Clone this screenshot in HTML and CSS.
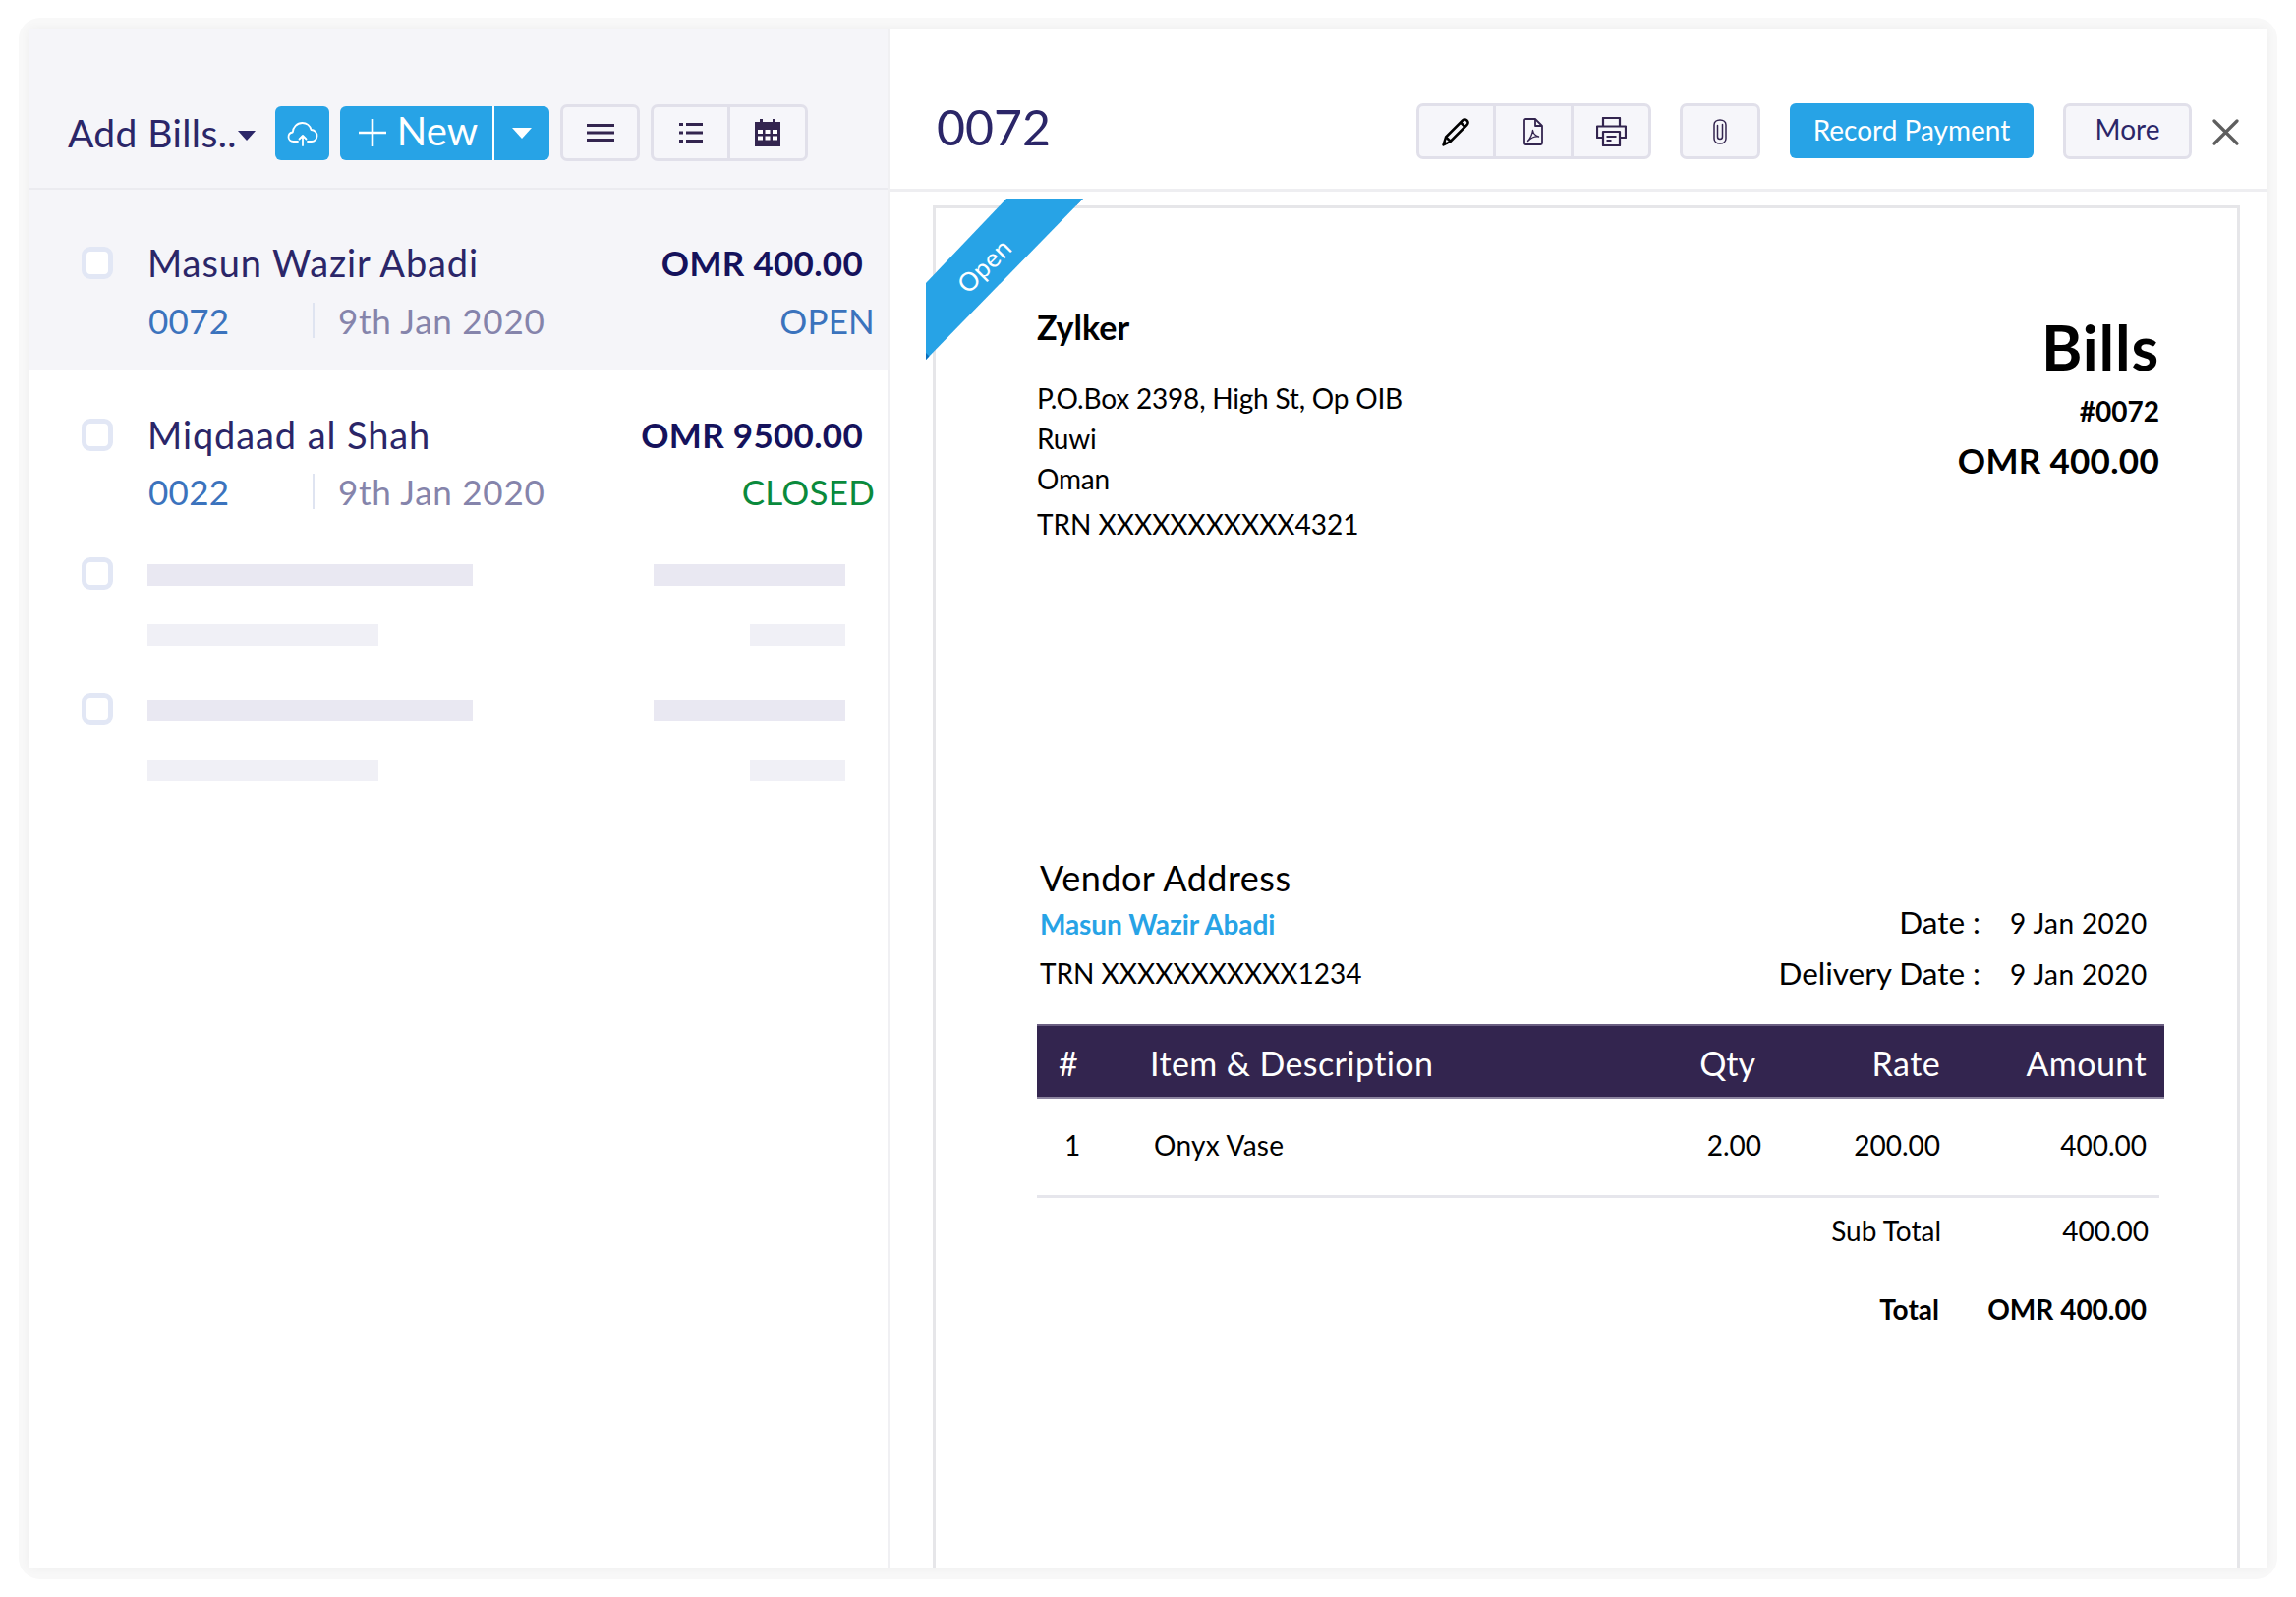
FILE: index.html
```html
<!DOCTYPE html>
<html lang="en">
<head>
<meta charset="utf-8">
<title>Bills</title>
<link rel="stylesheet" href="styles.css">
</head>
<body>
<div class="frame">
<div class="window">
  <section class="list-pane">
    <header class="list-head">
      <div class="title">Add Bills..<span class="caret"></span></div>
      <button class="btn-blue cloud">
        <svg width="32" height="26" viewBox="0 0 32 26" fill="none" stroke="#fff" stroke-width="1.8" stroke-linecap="round" stroke-linejoin="round"><path d="M11 21H6.500C3.500 21 1.500 19 1.500 16.300c0-2.500 1.800-4.500 4.300-4.800C6 6.500 10 2 15.500 2c4.500 0 8 3 9 7 3.500 0 6 2.800 6 6.200 0 3.300-2.500 5.800-5.500 5.800h-4"/><path d="M16 25V15M12.500 18.500l3.500-3.500 3.500 3.500"/></svg>
      </button>
      <div class="new-group">
        <button class="btn-blue new-main">
          <svg class="plus" width="28" height="28" viewBox="0 0 28 28" stroke="#fff" stroke-width="2.600"><path d="M14 0v28M0 14h28"/></svg>
          <span class="new-label">New</span>
        </button>
        <button class="btn-blue new-drop"><span class="caret white"></span></button>
      </div>
      <button class="tool solo">
        <svg width="28" height="18" viewBox="0 0 28 18" fill="#33254f"><rect width="28" height="3"/><rect y="7.500" width="28" height="3"/><rect y="15" width="28" height="3"/></svg>
      </button>
      <div class="tool-group">
        <button class="tool seg seg-a">
          <svg width="24" height="20" viewBox="0 0 24 20" fill="#33254f"><rect width="4" height="3"/><rect x="7" width="17" height="3"/><rect y="8.500" width="4" height="3"/><rect x="7" y="8.500" width="17" height="3"/><rect y="17" width="4" height="3"/><rect x="7" y="17" width="17" height="3"/></svg>
        </button>
        <button class="tool seg seg-b">
          <svg width="26" height="28" viewBox="0 0 26 28"><path fill="#33254f" d="M0 3h5V0h3v3h10V0h3v3h5v25H0z"/><path fill="#fff" d="M3 11h5v4H3zM10.500 11h5v4h-5zM18 11h5v4h-5zM3 17.500h5v4H3zM10.500 17.500h5v4h-5zM18 17.500h5v4h-5z"/></svg>
        </button>
      </div>
    </header>

    <article class="bill selected">
      <span class="check"></span>
      <div class="bill-body">
        <div class="line-top"><span class="name">Masun Wazir Abadi</span><span class="amount">OMR 400.00</span></div>
        <div class="line-sub"><span class="num">0072</span><span class="date">9th Jan 2020</span><span class="status open">OPEN</span></div>
      </div>
    </article>
    <article class="bill second">
      <span class="check"></span>
      <div class="bill-body">
        <div class="line-top"><span class="name">Miqdaad al Shah</span><span class="amount">OMR 9500.00</span></div>
        <div class="line-sub"><span class="num">0022</span><span class="date">9th Jan 2020</span><span class="status closed">CLOSED</span></div>
      </div>
    </article>
    <div class="skeleton first">
      <span class="check"></span>
      <div class="sk-grid"><i class="sk dark w331"></i><i class="sk dark w195"></i><i class="sk light w235"></i><i class="sk light w97"></i></div>
    </div>
    <div class="skeleton">
      <span class="check"></span>
      <div class="sk-grid"><i class="sk dark w331"></i><i class="sk dark w195"></i><i class="sk light w235"></i><i class="sk light w97"></i></div>
    </div>
  </section>

  <section class="detail-pane">
    <header class="detail-head">
      <h1 class="doc-no">0072</h1>
      <div class="detail-tools">
        <div class="tool-group flush">
          <button class="tool seg ic-a">
            <svg width="30" height="30" viewBox="0 0 30 30" fill="none" stroke="#000" stroke-width="2.500" stroke-linejoin="round"><path d="M1.500 28.500l2.500-8L21 3.500c1.500-1.500 3-1.500 4.500 0s1.500 3 0 4.500L8.500 25z"/><path d="M4 20.500l5 4.500M19 5.500l5 5"/><path fill="#000" stroke="none" d="M1 29l1.500-5 3.500 3.500z"/></svg>
          </button>
          <button class="tool seg ic-b">
            <svg width="20" height="28" viewBox="0 0 20 28" fill="none" stroke="#33254f" stroke-width="1.800" stroke-linejoin="round"><path d="M1 2.500C1 1.500 1.500 1 2.500 1H12l7 7v17.500c0 1-.5 1.500-1.500 1.500h-15C1.500 27 1 26.500 1 25.500z"/><path d="M12 1v7h7"/><path stroke-width="1.400" d="M4.500 23.500c2.500-3 4.500-6.500 5-11 .5 3.500 2.500 5.500 6 6.500-3.500-.5-7 .5-11 4.500z"/></svg>
          </button>
          <button class="tool seg ic-c">
            <svg width="31" height="30" viewBox="0 0 31 30" fill="none" stroke="#33254f" stroke-width="2.200" stroke-linejoin="round"><path d="M7 9V1h17v8"/><path d="M6.500 21H1V9.500h29V21h-5"/><path d="M7 15h17v14H7z"/><path stroke-width="2" d="M10.500 20h10M10.500 24h5"/></svg>
          </button>
        </div>
        <button class="tool solo clip">
          <svg width="14" height="26" viewBox="0 0 14 26" fill="none" stroke="#33254f" stroke-width="1.500" stroke-linecap="round"><path d="M7 25C3.500 25 1 23 1 20V6C1 3 3.500 1 7 1s6 2 6 5v14c0 3-2.500 5-6 5z"/><path d="M4.500 6.500V18c0 1.500 1 2.500 2.500 2.500s2.500-1 2.500-2.500V5.500"/></svg>
        </button>
        <button class="btn-blue record"><span class="record-label">Record Payment</span></button>
        <button class="tool solo more"><span class="more-label">More</span></button>
        <svg class="close" width="27" height="27" viewBox="0 0 27 27" stroke="#5e5e5e" stroke-width="3.200" stroke-linecap="round"><path d="M2 2l23 23M25 2L2 25"/></svg>
      </div>
    </header>

    <div class="sheet-wrap">
      <div class="ribbon"><span class="ribbon-text">Open</span></div>
      <div class="sheet">
        <div class="sheet-top">
          <div class="org">
            <div class="org-name">Zylker</div>
            <div class="org-line first">P.O.Box 2398, High St, Op OIB</div>
            <div class="org-line">Ruwi</div>
            <div class="org-line">Oman</div>
            <div class="org-line trn">TRN XXXXXXXXXXX4321</div>
          </div>
          <div class="doc-meta">
            <div class="doc-title">Bills</div>
            <div class="doc-ref">#0072</div>
            <div class="doc-total">OMR 400.00</div>
          </div>
        </div>

        <div class="vendor">
          <div class="vendor-left">
            <div class="vendor-label">Vendor Address</div>
            <div class="vendor-name">Masun Wazir Abadi</div>
            <div class="vendor-trn">TRN XXXXXXXXXXX1234</div>
          </div>
          <div class="dates">
            <span class="date-label">Date :</span><span class="date-val">9 Jan 2020</span>
            <span class="date-label">Delivery Date :</span><span class="date-val">9 Jan 2020</span>
          </div>
        </div>

        <div class="items">
          <div class="items-head"><span>#</span><span>Item &amp; Description</span><span class="r qty">Qty</span><span class="r">Rate</span><span class="r">Amount</span></div>
          <div class="items-row"><span>1</span><span class="item-name">Onyx Vase</span><span class="r">2.00</span><span class="r">200.00</span><span class="r">400.00</span></div>
          <div class="sum sub"><span class="r">Sub Total</span><span class="r">400.00</span></div>
          <div class="sum total"><span class="r">Total</span><span class="r">OMR 400.00</span></div>
        </div>
      </div>
    </div>
  </section>
</div>
</div>
</body>
</html>
```
FILE: styles.css
```css
* { box-sizing: border-box; }
html, body { margin: 0; padding: 0; background: #fff; }
body { font-family: "Lato", "Noto Sans", sans-serif; color: #000; width: 2336px; height: 1625px; overflow: hidden; }
button { font: inherit; margin: 0; padding: 0; border: 0; cursor: pointer; }

.frame { margin: 18px 0 0 19px; width: 2298px; height: 1589px; padding: 12px 11px; background: #f8f8f8; border-radius: 22px; }
.window { width: 2276px; height: 1565px; background: #fff; display: flex; box-shadow: 0 0 10px rgba(0,0,0,.05); }

/* left pane */
.list-pane { width: 875px; flex: none; border-right: 2px solid #f0f0f3; }
.list-head { height: 163px; background: #f5f5f9; border-bottom: 2px solid #ebebf0; display: flex; align-items: flex-start; padding: 76px 0 0 39px; }
.title { width: 211px; font-size: 39px; line-height: 46px; letter-spacing: .4px; color: #2b2668; padding-top: 6px; white-space: nowrap; display: flex; align-items: center; }
.caret { display: inline-block; width: 0; height: 0; border-left: 9px solid transparent; border-right: 9px solid transparent; border-top: 10px solid #2b2668; margin: 6px 0 0 1px; }
.caret.white { border-top-color: #fff; border-left-width: 10px; border-right-width: 10px; border-top-width: 11px; margin: 0; }
.btn-blue { background: #27a3e6; color: #fff; border-radius: 6px; display: flex; align-items: center; justify-content: center; }
.cloud { width: 55px; height: 55px; margin-top: 2px; }
.new-group { display: flex; margin: 2px 11px 0 11px; width: 213px; height: 55px; }
.new-main { width: 157px; height: 55px; border-radius: 6px 0 0 6px; font-size: 40px; border-right: 2px solid #fff; padding: 0 0 5px 4px; }
.plus { margin-right: 11px; margin-top: 4px; }
.new-drop { flex: 1; height: 55px; border-radius: 0 6px 6px 0; }
.tool { background: #f6f6fa; border: 3px solid #e1e0ea; border-radius: 7px; display: flex; align-items: center; justify-content: center; height: 58px; color: #2b2668; }
.list-head .solo { width: 81px; }
.tool-group { display: flex; margin-left: 11px; }
.seg { border-radius: 0; }
.list-head .seg-a { width: 81px; border-radius: 7px 0 0 7px; }
.list-head .seg-b { width: 79px; border-left: 0; border-radius: 0 7px 7px 0; }

.bill { display: flex; padding-left: 53px; }
.bill .check { margin-top: 7px; }
.selected { height: 183px; background: #f5f5f9; padding-top: 51px; }
.second { height: 178px; padding-top: 43px; }
.second .line-sub { margin-top: 17px; }
.check { flex: none; display: block; width: 32px; height: 33px; background: #fff; border: 5px solid #e2e7f5; border-radius: 9px; }
.bill-body { margin-left: 36px; flex: 1; }
.line-top { display: flex; justify-content: space-between; align-items: baseline; padding-right: 25px; height: 46px; }
.name { font-size: 38px; line-height: 46px; letter-spacing: .9px; color: #2b2668; margin-left: -1px; }
.amount { font-size: 35px; font-weight: 700; letter-spacing: .3px; color: #15125c; position: relative; top: -1px; }
.line-sub { display: flex; align-items: center; height: 36px; margin-top: 18px; padding-right: 13px; font-size: 35px; }
.num { width: 169px; height: 36px; line-height: 36px; letter-spacing: .3px; color: #3b73bd; border-right: 2px solid #dfe4f1; }
.date { margin-left: 24px; letter-spacing: .75px; color: #8584ab; }
.status { margin-left: auto; }
.open { color: #3b73bd; letter-spacing: .2px; }
.closed { color: #0a8a3c; letter-spacing: .2px; }

.skeleton { display: flex; padding-left: 53px; height: 138px; }
.skeleton.first { margin-top: 13px; }
.sk-grid { margin: 7px 0 0 35px; width: 710px; display: grid; grid-template-columns: auto auto; justify-content: space-between; row-gap: 39px; align-content: start; }
.sk { display: block; height: 22px; }
.sk:nth-child(even) { justify-self: end; }
.dark { background: #e9e8f2; }
.light { background: #f0f0f6; }
.w331 { width: 331px; }
.w195 { width: 195px; }
.w235 { width: 235px; }
.w97 { width: 97px; }

/* right pane */
.detail-pane { flex: 1; min-width: 0; }
.detail-head { height: 165px; border-bottom: 3px solid #eeeef1; display: flex; align-items: flex-start; padding: 71px 0 0 48px; }
.doc-no { margin: 0; font-size: 50px; line-height: 56px; font-weight: 400; color: #2b2668; width: 488px; }
.detail-tools { display: flex; align-items: flex-start; margin-top: 4px; }
.flush { margin-left: 0; }
.detail-tools .tool { height: 57px; }
.detail-tools .ic-a { width: 81px; border-radius: 7px 0 0 7px; }
.detail-tools .ic-b { width: 79px; border-left: 0; }
.detail-tools .ic-c { width: 79px; border-left: 0; border-radius: 0 7px 7px 0; }
.clip { width: 82px; margin-left: 29px; }
.record { width: 248px; height: 56px; margin-left: 30px; font-size: 28px; }
.record-label { margin-bottom: 3px; }
.more { width: 131px; margin-left: 30px; font-size: 28px; }
.more-label { margin-bottom: 6px; }
.close { margin: 16px 0 0 21px; }

.sheet-wrap { position: relative; padding: 14px 27px 0 44px; }
.sheet { height: 1386px; border: 3px solid #e6e6e9; border-bottom: 0; padding: 0 74px 0 103px; }
.ribbon { position: absolute; left: 37px; top: 7px; width: 160px; height: 164px; background: #27a3e6; clip-path: polygon(82px 0, 160px 0, 0 164px, 0 86px); }
.ribbon::before, .ribbon::after { content: ""; position: absolute; background: #0b6fbe; width: 7px; height: 7px; }
.ribbon::before { right: 0; top: 0; clip-path: polygon(100% 0, 100% 100%, 0 100%); }
.ribbon::after { left: 0; bottom: 0; clip-path: polygon(0 0, 100% 100%, 0 100%); }
.ribbon-text { position: absolute; left: 24px; top: 53px; width: 70px; text-align: center; color: #fff; font-size: 26px; line-height: 30px; letter-spacing: .5px; transform: rotate(-45deg); }

.sheet-top { display: flex; justify-content: space-between; padding: 101px 5px 0 0; height: 658px; }
.org-name { font-size: 34px; line-height: 40px; font-weight: 700; }
.org-line { font-size: 28px; line-height: 41px; letter-spacing: -.2px; }
.org-line.first { margin-top: 32px; }
.org-line.trn { margin-top: 5px; letter-spacing: 0; }
.doc-meta { text-align: right; }
.doc-title { font-size: 63px; line-height: 70px; font-weight: 700; letter-spacing: .8px; margin-top: 5px; }
.doc-ref { font-size: 28px; line-height: 36px; font-weight: 700; margin-top: 12px; }
.doc-total { font-size: 35px; line-height: 42px; font-weight: 700; letter-spacing: .3px; margin-top: 11px; }

.vendor { display: flex; justify-content: space-between; padding: 0 18px 0 3px; height: 172px; }
.vendor-label { font-size: 36px; line-height: 46px; letter-spacing: .5px; }
.vendor-name { font-size: 28px; line-height: 34px; font-weight: 700; color: #27a3e6; margin-top: 7px; letter-spacing: -.1px; }
.vendor-trn { font-size: 28px; line-height: 34px; margin-top: 16px; }
.dates { display: grid; grid-template-columns: auto 139px; column-gap: 30px; row-gap: 13px; align-content: start; padding-top: 49px; align-items: baseline; }
.date-label { font-size: 31.5px; line-height: 38px; text-align: right; }
.date-val { font-size: 28px; line-height: 38px; letter-spacing: .4px; white-space: nowrap; }

.r { text-align: right; }
.items-head { height: 76px; background: #33254f; border-top: 2px solid #6b5f82; border-bottom: 2px solid #8d85a0; color: #fff; font-size: 34px; line-height: 75px; letter-spacing: .4px; display: grid; grid-template-columns: 93px 1fr 120px 188px 210px; padding: 0 18px 0 22px; }
.qty { letter-spacing: 0; }
.items-row { height: 101px; border-bottom: 3px solid #e6e6ec; margin-right: 5px; font-size: 28px; line-height: 95px; display: grid; grid-template-columns: 88px 1fr 120px 182px 210px; padding: 0 13px 0 28px; }
.item-name { letter-spacing: .3px; margin-left: 3px; }
.sum { display: grid; grid-template-columns: 1fr 211px; font-size: 28px; padding-right: 16px; }
.sub { margin-top: 16px; line-height: 34px; }
.total { margin-top: 46px; line-height: 34px; font-weight: 700; padding-right: 18px; }
```
